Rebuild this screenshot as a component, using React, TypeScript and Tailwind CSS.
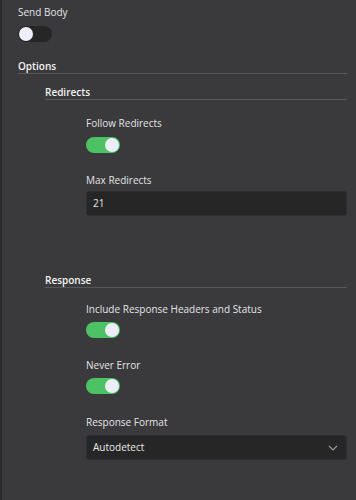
function Toggle({ on }: { on: boolean }) {
  return (
    <div
      className={`w-[34px] h-[16px] rounded-full flex items-center px-[1px] ${
        on ? 'bg-[#4cc264] justify-end' : 'bg-[#262627] justify-start'
      }`}
    >
      <div className="w-[14px] h-[14px] rounded-full bg-[#eceefa]" />
    </div>
  );
}

function Label({ children }: { children: React.ReactNode }) {
  return <div className="text-[10px] leading-[14px] text-[#e4e4e6]">{children}</div>;
}

function Heading({ children }: { children: React.ReactNode }) {
  return (
    <div className="border-b border-[#57585b]">
      <div className="text-[10px] leading-[14px] font-semibold text-[#f2f2f2]">{children}</div>
    </div>
  );
}

export default function App() {
  return (
    <div
      className="w-[356px] h-[500px] bg-[#3a3a3c] border-l-2 border-[#2a2a2b] pl-[16px] pr-[9px] pt-[5px]"
      style={{ fontFamily: '"Open Sans", "Noto Sans", sans-serif' }}
    >
      {/* Send body */}
      <Label>Send Body</Label>
      <div className="mt-[7px]">
        <Toggle on={false} />
      </div>

      {/* Options */}
      <div className="mt-[17px]">
        <Heading>Options</Heading>

        <div className="pl-[27px] mt-[11px]">
          <Heading>Redirects</Heading>
          <div className="pl-[41px] mt-[16px]">
            <Label>Follow Redirects</Label>
            <div className="mt-[7px]">
              <Toggle on />
            </div>
            <div className="mt-[20px]">
              <Label>Max Redirects</Label>
            </div>
            <div className="mt-[4px] h-[25px] rounded-[3px] bg-[#262627] border border-[#2e2e30] flex items-center px-[6px] text-[10px] text-[#e8e8e8]">
              21
            </div>
          </div>
        </div>

        <div className="pl-[27px] mt-[57px]">
          <Heading>Response</Heading>
          <div className="pl-[41px] mt-[14px]">
            <Label>Include Response Headers and Status</Label>
            <div className="mt-[6px]">
              <Toggle on />
            </div>
            <div className="mt-[20px]">
              <Label>Never Error</Label>
            </div>
            <div className="mt-[6px]">
              <Toggle on />
            </div>
            <div className="mt-[21px]">
              <Label>Response Format</Label>
            </div>
            <div className="mt-[6px] h-[25px] rounded-[3px] bg-[#262627] border border-[#2e2e30] flex items-center justify-between pl-[6px] pr-[8px] text-[10px] text-[#e8e8e8]">
              <span>Autodetect</span>
              <svg width="10" height="6" viewBox="0 0 10 6" fill="none">
                <path d="M1 1l4 4 4-4" stroke="#9a9a9c" strokeWidth="1.2" />
              </svg>
            </div>
          </div>
        </div>
      </div>
    </div>
  );
}
